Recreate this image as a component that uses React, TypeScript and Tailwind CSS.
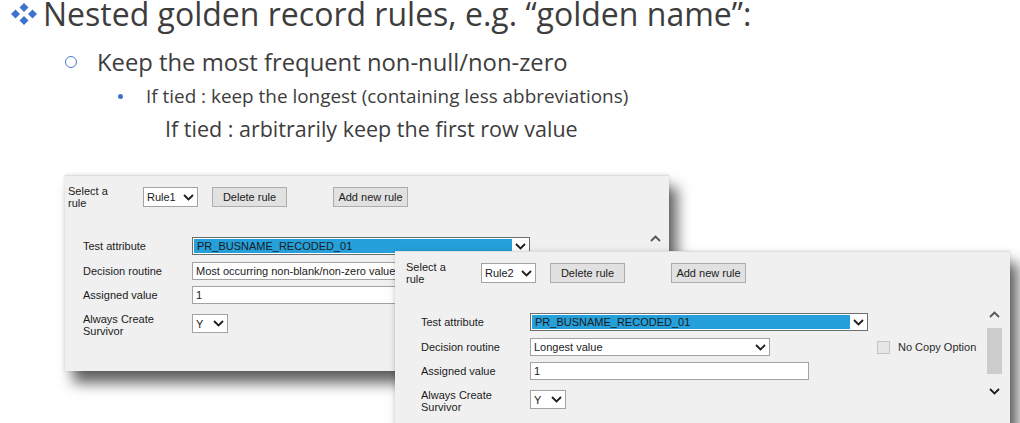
import React from "react";

const ui = "font-['Liberation_Sans',Arial,sans-serif] text-[11px] leading-[12px] text-[#1b1b1b]";

function Chevron({ up = false }: { up?: boolean }) {
  return (
    <svg width="11" height="7" viewBox="0 0 11 7" className="shrink-0">
      <path
        d={up ? "M1 6 L5.5 1.5 L10 6" : "M1 1 L5.5 5.5 L10 1"}
        fill="none"
        stroke={up ? "#555" : "#1e1e1e"}
        strokeWidth="1.8"
      />
    </svg>
  );
}

function Combo({
  value,
  width,
  height = "h-[18px]",
  selected = false,
}: {
  value: string;
  width: string;
  height?: string;
  selected?: boolean;
}) {
  return (
    <div
      className={`${width} ${height} flex items-stretch bg-white border ${
        selected ? "border-[#6e6e6e]" : "border-[#a3a3a3]"
      }`}
    >
      <div
        className={`flex-1 flex items-center pl-[3px] overflow-hidden whitespace-nowrap ${
          selected ? "bg-[#26a0da] m-[1px] mr-0" : ""
        }`}
      >
        {value}
      </div>
      <div className="w-[17px] flex items-center justify-center">
        <Chevron />
      </div>
    </div>
  );
}

function Field({ value, width }: { value: string; width: string }) {
  return (
    <div className={`${width} h-[18px] bg-white border border-[#a3a3a3] flex items-center pl-[3px]`}>
      {value}
    </div>
  );
}

function Button({ label, width }: { label: string; width: string }) {
  return (
    <div
      className={`${width} h-[20px] bg-[#e1e1e1] border border-[#adadad] flex items-center justify-center`}
    >
      {label}
    </div>
  );
}

interface RulePanelProps {
  rule: string;
  routine: string;
  pad: string;
  noCopy?: boolean;
  thumb?: boolean;
  className: string;
}

const RulePanel: React.FC<RulePanelProps> = ({ rule, routine, pad, noCopy, thumb, className }) => {
  return (
    <div
      className={`absolute bg-[#f0f0f0] border-t border-[#dedede] flex shadow-[8px_12px_13px_rgba(0,0,0,0.62),0_0_4px_rgba(0,0,0,0.12)] ${ui} ${className}`}
    >
      <div className={`flex-1 ${pad}`}>
        {/* Header */}
        <div className="flex items-start pt-[9px]">
          <div className="w-[75px] leading-[12px]">
            Select a
            <br />
            rule
          </div>
          <div className="mt-[2px]">
            <Combo value={rule} width="w-[55px]" height="h-[20px]" />
          </div>
          <div className="mt-[2px] ml-[14px]">
            <Button label="Delete rule" width="w-[75px]" />
          </div>
          <div className="mt-[2px] ml-[46px]">
            <Button label="Add new rule" width="w-[75px]" />
          </div>
        </div>

        {/* Form */}
        <div className="mt-[28px] flex flex-col pl-[15px]">
          <div className="flex items-center h-[18px]">
            <div className="w-[109px]">Test attribute</div>
            <Combo value="PR_BUSNAME_RECODED_01" width="w-[338px]" selected />
          </div>
          <div className="flex items-center h-[18px] mt-[7px]">
            <div className="w-[109px]">Decision routine</div>
            <Combo value={routine} width="w-[240px]" />
            {noCopy && (
              <div className="flex items-center ml-[107px] text-[#2b2b2b]">
                <div className="w-[13px] h-[13px] border border-[#c4c4c4] bg-[#e6e6e6]" />
                <span className="ml-[8px]">No Copy Option</span>
              </div>
            )}
          </div>
          <div className="flex items-center h-[18px] mt-[6px]">
            <div className="w-[109px]">Assigned value</div>
            <Field value="1" width="w-[279px]" />
          </div>
          <div className="flex items-start mt-[9px]">
            <div className="w-[109px] leading-[12px]">
              Always Create
              <br />
              Survivor
            </div>
            <div className="mt-[1px]">
              <Combo value="Y" width="w-[36px]" height="h-[19px]" />
            </div>
          </div>
        </div>
      </div>

      {/* Scrollbar */}
      <div className="w-[15px] flex flex-col items-center pt-[59px]">
        <Chevron up />
        {thumb && (
          <>
            <div className="w-[15px] h-[46px] bg-[#cdcdcd] mt-[10px]" />
            <div className="mt-[14px]">
              <Chevron />
            </div>
          </>
        )}
      </div>
    </div>
  );
};

function Diamonds() {
  return (
    <svg width="28" height="22" viewBox="0 0 28 22" className="shrink-0 mt-[3px]">
      <g fill="#3f72cc">
        <path d="M14 0 L18.5 4.5 L14 9 L9.5 4.5 Z" />
        <path d="M5.5 6.5 L10 11 L5.5 15.5 L1 11 Z" />
        <path d="M22.5 6.5 L27 11 L22.5 15.5 L18 11 Z" />
        <path d="M14 13 L18.5 17.5 L14 22 L9.5 17.5 Z" />
      </g>
    </svg>
  );
}

export default function App() {
  return (
    <div className="w-[1020px] h-[423px] overflow-hidden bg-white relative">
      {/* Slide text */}
      <div className="h-[150px] font-['Open_Sans','Lato',sans-serif] text-[#3d3d3d]">
        <div className="flex items-start pl-[10px]">
          <Diamonds />
          <span className="ml-[5px] text-[32px] leading-[28px] whitespace-nowrap">
            Nested golden record rules, e.g. “golden name”:
          </span>
        </div>
        <div className="flex items-center pl-[65px] mt-[19px] h-[30px]">
          <span className="w-[12px] h-[12px] rounded-full border-[1.5px] border-[#4a7bd2]" />
          <span className="ml-[20px] text-[23.8px] leading-[30px] whitespace-nowrap">
            Keep the most frequent non-null/non-zero
          </span>
        </div>
        <div className="flex items-center pl-[118px] mt-[8px] h-[22px]">
          <span className="w-[5px] h-[5px] rounded-full bg-[#3f72cc]" />
          <span className="ml-[23px] text-[18.9px] leading-[22px] whitespace-nowrap">
            If tied : keep the longest (containing less abbreviations)
          </span>
        </div>
        <div className="pl-[165px] mt-[9px] text-[21.5px] leading-[26px] whitespace-nowrap">
          If tied : arbitrarily keep the first row value
        </div>
      </div>

      {/* Screenshots */}
      <RulePanel
        rule="Rule1"
        routine="Most occurring non-blank/non-zero value"
        pad="pl-[3px]"
        className="left-[65px] top-[175px] w-[604px] h-[196px] pr-[6px]"
      />
      <RulePanel
        rule="Rule2"
        routine="Longest value"
        pad="pl-[11px]"
        noCopy
        thumb
        className="left-[395px] top-[251px] w-[615px] h-[190px] pr-[8px]"
      />
    </div>
  );
}
